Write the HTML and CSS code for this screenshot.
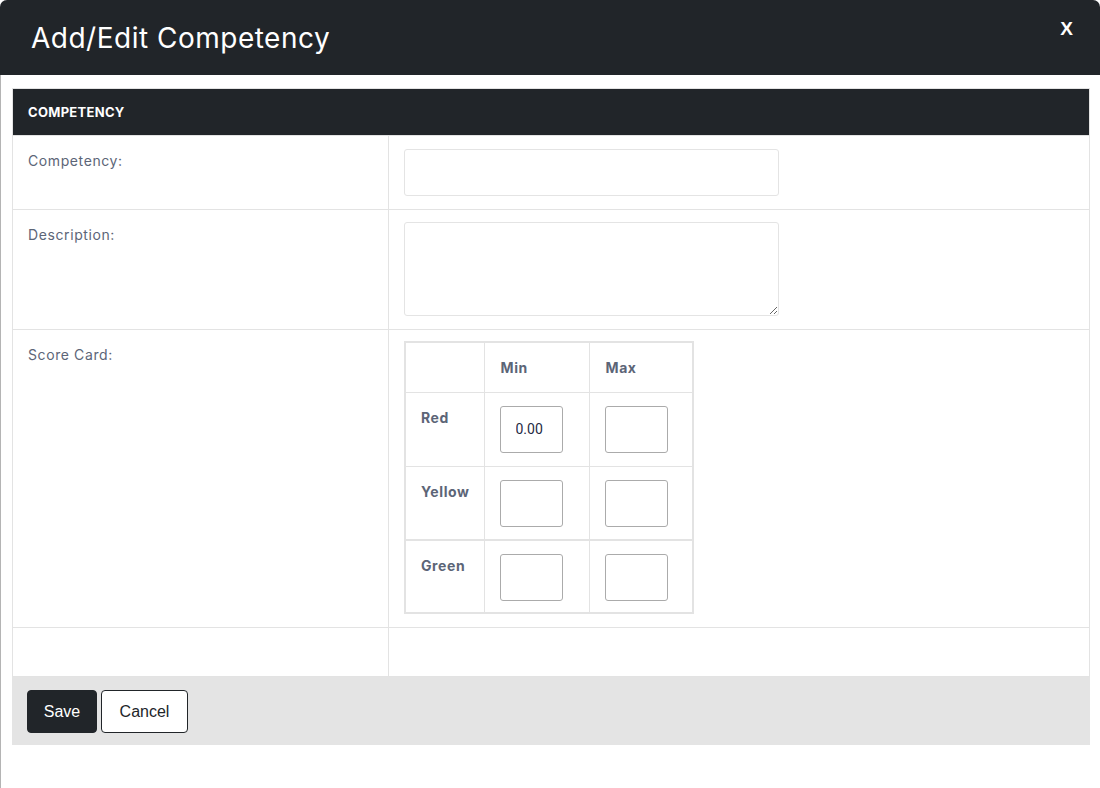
FILE: index.html
```html
<!DOCTYPE html>
<html>
<head>
<meta charset="utf-8">
<link rel="stylesheet" href="styles.css">
</head>
<body>
<div class="modal">
  <div class="modal-header">
    <h1 class="modal-title">Add/Edit Competency</h1>
    <span class="close">X</span>
  </div>
  <div class="modal-body">
    <table class="form-table">
      <thead>
        <tr><th colspan="2">Competency</th></tr>
      </thead>
      <tbody>
        <tr class="row-competency">
          <td class="label-cell">Competency:</td>
          <td class="field-cell"><input class="text-input" type="text"></td>
        </tr>
        <tr class="row-description">
          <td class="label-cell">Description:</td>
          <td class="field-cell"><textarea class="text-area"></textarea></td>
        </tr>
        <tr class="row-score">
          <td class="label-cell">Score Card:</td>
          <td class="field-cell">
            <table class="score-table">
              <tr class="score-head">
                <th></th><th>Min</th><th>Max</th>
              </tr>
              <tr class="score-row">
                <th>Red</th>
                <td><input class="num-input" type="text" value="0.00"></td>
                <td><input class="num-input" type="text"></td>
              </tr>
              <tr class="score-row">
                <th>Yellow</th>
                <td><input class="num-input" type="text"></td>
                <td><input class="num-input" type="text"></td>
              </tr>
              <tr class="score-row thick">
                <th>Green</th>
                <td><input class="num-input" type="text"></td>
                <td><input class="num-input" type="text"></td>
              </tr>
            </table>
          </td>
        </tr>
        <tr class="row-empty">
          <td class="label-cell"></td>
          <td class="field-cell"></td>
        </tr>
      </tbody>
    </table>
    <div class="footer">
      <button class="btn btn-save">Save</button>
      <button class="btn btn-cancel">Cancel</button>
    </div>
  </div>
</div>
</body>
</html>
```

FILE: styles.css
```css
html, body {
  margin: 0;
  padding: 0;
  background: #ffffff;
}
body {
  font-family: "Inter", "Noto Sans", sans-serif;
  overflow: hidden;
}
.modal {
  width: 1099px;
  height: 788px;
  border-left: 1px solid #b4b4b4;
  border-radius: 7px 7px 0 0;
  background: #ffffff;
}
.modal-header {
  height: 75px;
  background: #212529;
  border-radius: 7px 7px 0 0;
  display: flex;
  align-items: center;
  justify-content: space-between;
  padding: 0 27px 0 31px;
  margin-left: -1px;
}
.modal-title {
  margin: 0;
  font-weight: 400;
  font-size: 28px;
  letter-spacing: 0.5px;
  color: #ffffff;
}
.close {
  font-family: "Liberation Sans", Arial, sans-serif;
  font-weight: 700;
  font-size: 19px;
  color: #ffffff;
  align-self: flex-start;
  margin-top: 18px;
}
.modal-body {
  padding: 13px 10px 0 11px;
}
.form-table {
  width: 1078px;
  border-collapse: collapse;
  border: 1px solid #e3e3e3;
}
.form-table thead th {
  background: #212529;
  color: #ffffff;
  text-transform: uppercase;
  font-size: 13px;
  font-weight: 700;
  letter-spacing: 0.3px;
  text-align: left;
  height: 47px;
  padding: 0 15px;
  box-sizing: border-box;
}
.form-table > tbody > tr > td {
  border: 1px solid #e3e3e3;
  vertical-align: top;
  padding: 13px 15px 0 15px;
  box-sizing: border-box;
}
.form-table > tbody > tr > td.label-cell {
  padding-top: 14px;
}
.label-cell {
  width: 376px;
  color: #5c6577;
  font-size: 14px;
  letter-spacing: 0.6px;
  line-height: 22px;
}
.row-competency > td { height: 74px; }
.row-description > td { height: 120px; }
.row-score > td { height: 298px; }
.row-empty > td { height: 49px; }
.text-input {
  display: block;
  width: 375px;
  height: 47px;
  box-sizing: border-box;
  border: 1px solid #e4e4e4;
  border-radius: 3px;
  margin: 0;
}
.text-area {
  display: block;
  width: 375px;
  height: 94px;
  box-sizing: border-box;
  border: 1px solid #e4e4e4;
  border-radius: 3px;
  margin: -1px 0 0 0;
  resize: both;
}
.score-table {
  border-collapse: collapse;
  border: 2px solid #e3e3e3;
  margin-top: -2px;
}
.score-table th,
.score-table td {
  border: 1px solid #e3e3e3;
  vertical-align: top;
  text-align: left;
  box-sizing: border-box;
  color: #5c6577;
  font-size: 14px;
  font-weight: 700;
  letter-spacing: 0.6px;
}
.score-head th {
  height: 50px;
  padding: 16px 8px 0 16px;
}
.score-head th:nth-child(1) { width: 79px; }
.score-head th:nth-child(2) { width: 105px; }
.score-head th:nth-child(3) { width: 104px; }
.score-row th {
  padding: 16px 8px 0 15px;
}
.score-row td {
  padding: 13px 8px 0 15px;
}
.score-row > * { height: 74px; }
.score-row.thick > * { border-top: 2px solid #e3e3e3; height: 73px; }
.num-input {
  display: block;
  width: 63px;
  height: 47px;
  box-sizing: border-box;
  border: 1px solid #ababab;
  border-radius: 3px;
  margin: 0;
  padding: 0 0 0 15px;
  font-family: "Roboto", "Liberation Sans", sans-serif;
  font-size: 14px;
  letter-spacing: 0;
  color: #1f2a44;
}
.footer {
  width: 1078px;
  height: 68px;
  background: #e4e4e4;
  box-sizing: border-box;
  padding: 13px 15px;
  display: flex;
  gap: 4px;
}
.btn {
  height: 43px;
  border-radius: 4px;
  font-family: "Liberation Sans", Arial, sans-serif;
  font-size: 16px;
  padding: 0 15px;
  margin: 0;
  box-sizing: border-box;
}
.btn-save {
  width: 70px;
  background: #212529;
  border: 1px solid #212529;
  color: #ffffff;
}
.btn-cancel {
  width: 87px;
  background: #ffffff;
  border: 1px solid #212529;
  color: #212529;
}
```
